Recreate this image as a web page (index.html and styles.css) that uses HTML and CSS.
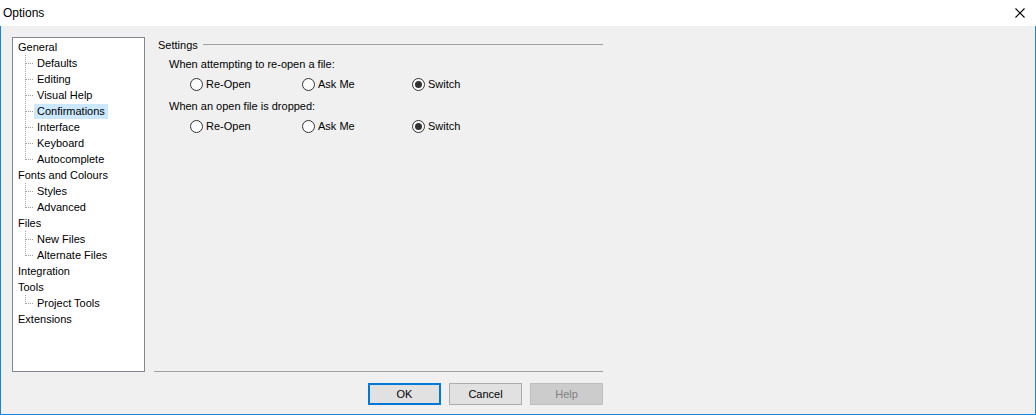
FILE: index.html
```html
<!DOCTYPE html>
<html>
<head>
<meta charset="utf-8">
<link rel="stylesheet" href="styles.css">
</head>
<body>
<div class="window">
  <div class="titlebar">
    <span class="title">Options</span>
    <span class="close"><svg width="10" height="10" viewBox="0 0 10 10"><path d="M0.5 0.5 L9.5 9.5 M9.5 0.5 L0.5 9.5" stroke="#000" stroke-width="1.1" fill="none"/></svg></span>
  </div>
  <div class="content">
    <div class="tree">
      <div class="row"><span class="lbl">General</span></div>
      <div class="kid"><span class="conn"></span><span class="lbl">Defaults</span></div>
      <div class="kid"><span class="conn"></span><span class="lbl">Editing</span></div>
      <div class="kid"><span class="conn"></span><span class="lbl">Visual Help</span></div>
      <div class="kid"><span class="conn"></span><span class="lbl sel">Confirmations</span></div>
      <div class="kid"><span class="conn"></span><span class="lbl">Interface</span></div>
      <div class="kid"><span class="conn"></span><span class="lbl">Keyboard</span></div>
      <div class="kid last"><span class="conn"></span><span class="lbl">Autocomplete</span></div>
      <div class="row"><span class="lbl">Fonts and Colours</span></div>
      <div class="kid"><span class="conn"></span><span class="lbl">Styles</span></div>
      <div class="kid last"><span class="conn"></span><span class="lbl">Advanced</span></div>
      <div class="row"><span class="lbl">Files</span></div>
      <div class="kid"><span class="conn"></span><span class="lbl">New Files</span></div>
      <div class="kid last"><span class="conn"></span><span class="lbl">Alternate Files</span></div>
      <div class="row"><span class="lbl">Integration</span></div>
      <div class="row"><span class="lbl">Tools</span></div>
      <div class="kid last"><span class="conn"></span><span class="lbl">Project Tools</span></div>
      <div class="row"><span class="lbl">Extensions</span></div>
    </div>
    <div class="right">
      <div class="panel">
        <div class="legend"><span>Settings</span><span class="rule"></span></div>
        <div class="question">When attempting to re-open a file:</div>
        <div class="radios">
          <div class="radio"><span class="dot"></span>Re-Open</div>
          <div class="radio"><span class="dot"></span>Ask Me</div>
          <div class="radio"><span class="dot on"></span>Switch</div>
        </div>
        <div class="question q2">When an open file is dropped:</div>
        <div class="radios">
          <div class="radio"><span class="dot"></span>Re-Open</div>
          <div class="radio"><span class="dot"></span>Ask Me</div>
          <div class="radio"><span class="dot on"></span>Switch</div>
        </div>
      </div>
      <div class="buttons">
        <div class="btn default">OK</div>
        <div class="btn">Cancel</div>
        <div class="btn disabled">Help</div>
      </div>
    </div>
  </div>
</div>
</body>
</html>
```
FILE: styles.css
```css
html, body {
  margin: 0;
  padding: 0;
}
body {
  width: 1036px;
  height: 415px;
  overflow: hidden;
  font-family: "Liberation Sans", Arial, sans-serif;
  font-size: 11px;
  color: #000;
}
.window {
  box-sizing: border-box;
  width: 1036px;
  height: 415px;
  background: #f0f0f0;
  border: 1px solid #1883d7;
  border-top: none;
  display: flex;
  flex-direction: column;
}
.titlebar {
  height: 26px;
  background: #fff;
  display: flex;
  align-items: center;
  justify-content: space-between;
  padding: 0 10px 0 3px;
  margin: 0 -1px;
}
.title {
  font-size: 12px;
  line-height: 16px;
}
.close {
  display: flex;
  margin-right: 1px;
}
.content {
  display: flex;
  padding: 11px 0 0 11px;
  gap: 9px;
}
.tree {
  box-sizing: border-box;
  width: 133px;
  height: 335px;
  background: #fff;
  border: 1px solid #828790;
  padding: 1px 0 0 2px;
}
.row, .kid {
  display: flex;
  align-items: center;
  height: 16px;
}
.kid {
  padding-left: 10px;
}
.lbl {
  display: inline-block;
  padding: 0 3px;
  line-height: 15px;
  height: 15px;
  white-space: nowrap;
}
.lbl.sel {
  background: #cce8ff;
}
.conn {
  width: 9px;
  height: 16px;
  background-image:
    repeating-linear-gradient(to right, #a0a0a0 0 1px, transparent 1px 2px),
    repeating-linear-gradient(to bottom, #a0a0a0 0 1px, transparent 1px 2px);
  background-size: 9px 1px, 1px 16px;
  background-position: 1px 8px, 0 0;
  background-repeat: no-repeat;
}
.kid.last .conn {
  background-size: 9px 1px, 1px 9px;
}
.right {
  width: 449px;
  display: flex;
  flex-direction: column;
}
.panel {
  box-sizing: border-box;
  height: 335px;
  padding-top: 1px;
  border-bottom: 1px solid #a0a0a0;
}
.legend {
  display: flex;
  align-items: center;
  height: 14px;
  padding-left: 4px;
}
.legend .rule {
  flex: 1;
  height: 1px;
  background: #a0a0a0;
  margin-left: 5px;
  margin-top: -2px;
}
.question {
  padding-left: 15px;
  margin-top: 5px;
  height: 14px;
  line-height: 14px;
}
.question.q2 {
  margin-top: 8px;
}
.radios {
  display: grid;
  grid-template-columns: 112px 110px auto;
  padding-left: 36px;
  margin-top: 6px;
  height: 14px;
}
.radio {
  display: flex;
  align-items: center;
  gap: 3px;
  line-height: 14px;
}
.dot {
  box-sizing: border-box;
  width: 13px;
  height: 13px;
  border-radius: 50%;
  border: 1px solid #333;
  background: #fff;
  display: flex;
  align-items: center;
  justify-content: center;
}
.dot.on::after {
  content: "";
  width: 7px;
  height: 7px;
  border-radius: 50%;
  background: #333;
}
.buttons {
  display: flex;
  justify-content: flex-end;
  gap: 8px;
  margin-top: 11px;
}
.btn {
  box-sizing: border-box;
  width: 73px;
  height: 22px;
  background: #e1e1e1;
  border: 1px solid #adadad;
  display: flex;
  align-items: center;
  justify-content: center;
}
.btn.default {
  border: 2px solid #0078d7;
}
.btn.disabled {
  background: #cccccc;
  border-color: #bfbfbf;
  color: #838383;
}
```
